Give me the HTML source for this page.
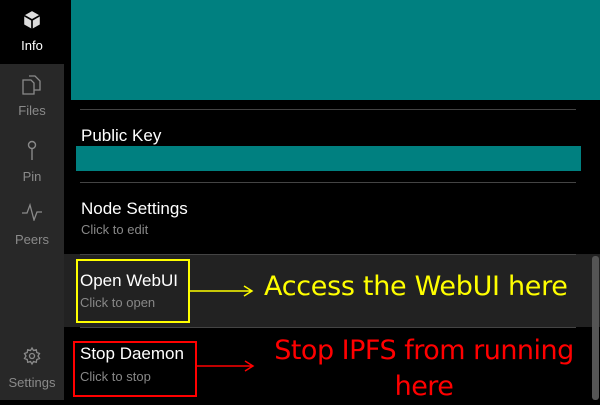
<!DOCTYPE html>
<html><head><style>
*{margin:0;padding:0;box-sizing:border-box}
body{width:600px;height:400px;background:#000;position:relative;overflow:hidden;font-family:"Liberation Sans",sans-serif}
.a{position:absolute}
.side{left:0;top:0;width:64px;height:400px;background:#282828}
.nav{position:absolute;left:0;width:64px;text-align:center;font-size:13px;color:#8a8a8a}
.t{color:#fff;font-size:17px}
.s{color:#888;font-size:13px}
.sep{height:1px;background:#444;left:80px;width:496px}
</style></head><body>
<div class="a side"></div>
<div class="a" style="left:0;top:0;width:64px;height:64px;background:#000"></div>
<div class="nav" style="top:10px;color:#fff">
<svg width="20" height="20" viewBox="0 0 18 18"><path d="M9 1L16 5V13L9 17L2 13V5Z" fill="#ddd"/><path d="M2 5L9 9L16 5M9 9V17" stroke="#000" stroke-width="1.5" fill="none"/></svg>
<div style="margin-top:5px">Info</div></div>
<div class="nav" style="top:74px"><svg width="22" height="22" viewBox="0 0 22 22" fill="none" stroke="#8a8a8a" stroke-width="1.3"><path d="M2 6h8l3 3v11H2z M8 2h6l5 5v9h-6"/></svg><div style="margin-top:4px">Files</div></div>
<div class="nav" style="top:140px"><svg width="12" height="22" viewBox="0 0 12 22" fill="none" stroke="#8a8a8a" stroke-width="1.4"><circle cx="6" cy="5" r="3.5"/><path d="M6 8.5V20"/></svg><div style="margin-top:4px">Pin</div></div>
<div class="nav" style="top:203px"><svg width="22" height="18" viewBox="0 0 22 18" fill="none" stroke="#8a8a8a" stroke-width="1.3"><path d="M1 10h5l3-8 4 15 3-8h5"/></svg><div style="margin-top:8px">Peers</div></div>
<div class="nav" style="top:346px"><svg width="20" height="20" viewBox="0 0 20 20" fill="none" stroke="#8a8a8a" stroke-width="1.3"><circle cx="10" cy="10" r="2.5"/><path d="M10 2l1.5 2.5 2.8-.8.5 2.8 2.7 1L16 10l1.5 2.5-2.7 1-.5 2.8-2.8-.8L10 18l-1.5-2.5-2.8.8-.5-2.8-2.7-1L4 10 2.5 7.5l2.7-1 .5-2.8 2.8.8z"/></svg><div style="margin-top:6px">Settings</div></div>

<div class="a" style="left:71px;top:0;width:529px;height:100px;background:#008080"></div>
<div class="a sep" style="top:109px"></div>
<div class="a t" style="left:81px;top:126px">Public Key</div>
<div class="a" style="left:76px;top:146px;width:505px;height:25px;background:#008080"></div>
<div class="a sep" style="top:182px"></div>
<div class="a t" style="left:81px;top:199px">Node Settings</div>
<div class="a s" style="left:81px;top:222px">Click to edit</div>
<div class="a" style="left:64px;top:254px;width:536px;height:73px;background:#222"></div>
<div class="a sep" style="top:254px"></div>
<div class="a sep" style="top:327px"></div>
<div class="a" style="left:592px;top:256px;width:7px;height:144px;background:#555;border-radius:3px"></div>
<div class="a t" style="left:80px;top:271px">Open WebUI</div>
<div class="a s" style="left:80px;top:295px">Click to open</div>
<div class="a" style="left:76px;top:259px;width:114px;height:64px;border:2px solid #ff0"></div>
<div class="a t" style="left:80px;top:344px">Stop Daemon</div>
<div class="a s" style="left:80px;top:369px">Click to stop</div>
<div class="a" style="left:73px;top:341px;width:124px;height:56px;border:2px solid #f00"></div>
<svg class="a" style="left:0;top:0" width="600" height="400"><path d="M190 291H251M244 286L252 291L244 296" stroke="#ff0" stroke-width="1.5" fill="none"/><path d="M197 366H252M245 361L253 366L245 371" stroke="#f00" stroke-width="1.5" fill="none"/></svg>
<div class="a" style="left:264px;top:271px;font-size:27px;color:#ff0;font-family:'DejaVu Sans',sans-serif;letter-spacing:-0.3px">Access the WebUI here</div>
<div class="a" style="left:258px;top:333px;width:332px;text-align:center;font-size:27px;line-height:36px;color:#f00;font-family:'DejaVu Sans',sans-serif;letter-spacing:-0.5px">Stop IPFS from running<br>here</div>
</body></html>
